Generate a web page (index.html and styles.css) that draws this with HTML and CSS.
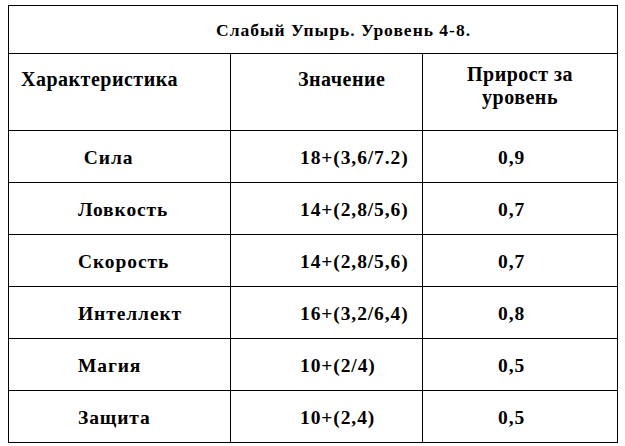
FILE: index.html
```html
<!DOCTYPE html>
<html lang="ru">
<head>
<meta charset="utf-8">
<title>Слабый Упырь</title>
<link rel="stylesheet" href="styles.css">
</head>
<body>
<table class="stats">
  <colgroup>
    <col class="c1">
    <col class="c2">
    <col class="c3">
  </colgroup>
  <tr class="title-row">
    <td class="title" colspan="3">Слабый Упырь. Уровень 4-8.</td>
  </tr>
  <tr class="head-row">
    <td class="h1">Характеристика</td>
    <td class="h2">Значение</td>
    <td class="h3">Прирост за<br>уровень</td>
  </tr>
  <tr class="row">
    <td class="name">&nbsp;Сила</td>
    <td class="val">18+(3,6/7.2)</td>
    <td class="inc">0,9</td>
  </tr>
  <tr class="row">
    <td class="name">Ловкость</td>
    <td class="val">14+(2,8/5,6)</td>
    <td class="inc">0,7</td>
  </tr>
  <tr class="row">
    <td class="name">Скорость</td>
    <td class="val">14+(2,8/5,6)</td>
    <td class="inc">0,7</td>
  </tr>
  <tr class="row">
    <td class="name">Интеллект</td>
    <td class="val">16+(3,2/6,4)</td>
    <td class="inc">0,8</td>
  </tr>
  <tr class="row">
    <td class="name">Магия</td>
    <td class="val">10+(2/4)</td>
    <td class="inc">0,5</td>
  </tr>
  <tr class="row">
    <td class="name">Защита</td>
    <td class="val">10+(2,4)</td>
    <td class="inc">0,5</td>
  </tr>
</table>
</body>
</html>
```
FILE: styles.css
```css
html, body {
  margin: 0;
  padding: 0;
  background: #fff;
}
body {
  padding: 5px 0 0 8px;
  font-family: "Liberation Serif", "Times New Roman", serif;
  font-weight: bold;
  color: #000;
}
.stats {
  border-collapse: collapse;
  width: 609px;
  table-layout: fixed;
}
.c1 { width: 222px; }
.c2 { width: 192px; }
.c3 { width: 195px; }
.stats td {
  border: 1px solid #000;
  padding: 0;
  white-space: nowrap;
}
.title-row { height: 48px; }
.stats .title {
  font-size: 17.5px;
  letter-spacing: 1px;
  text-align: left;
  vertical-align: middle;
  padding-left: 207px;
  padding-top: 2px;
}
.head-row { height: 77px; }
.stats .head-row td {
  font-size: 20px;
  letter-spacing: 0.5px;
  vertical-align: top;
  line-height: 23px;
}
.stats .head-row .h1 { padding-left: 12px; padding-top: 14px; }
.stats .head-row .h2 { padding-left: 67px; padding-top: 14px; }
.stats .head-row .h3 { text-align: center; padding-top: 9px; }
.row { height: 52px; }
.stats .row td {
  font-size: 19.5px;
  letter-spacing: 0.9px;
  vertical-align: middle;
  padding-top: 3px;
}
.stats .row .name { padding-left: 69px; }
.stats .row .val { padding-left: 69px; }
.stats .row .inc { padding-left: 75px; }
```
